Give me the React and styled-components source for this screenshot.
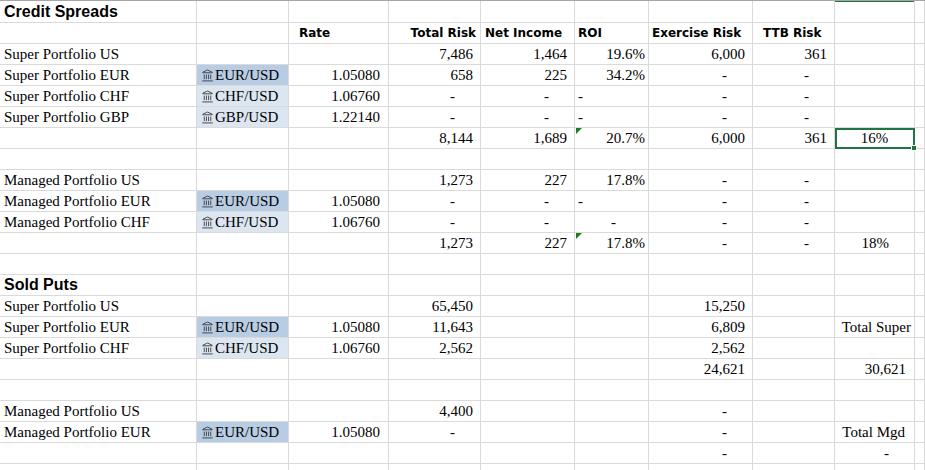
import React from "react";
import styled, { createGlobalStyle } from "styled-components";
import { Landmark } from "lucide-react";

const Global = createGlobalStyle`
  html, body { margin: 0; padding: 0; background: #fff; overflow: hidden; }
`;

const COLS = [197, 92, 100, 92, 94, 74, 104, 82, 80, 10];

const Sheet = styled.div`
  display: grid;
  grid-template-columns: ${COLS.map((c) => c + "px").join(" ")};
  grid-auto-rows: 21px;
  grid-template-rows: 22px;
  border-top: 1px solid #a6a6a6;
  width: 925px;
  height: 470px;
  overflow: hidden;
  box-sizing: border-box;
`;

const Cell = styled.div`
  position: relative;
  box-sizing: border-box;
  border-right: 1px solid #dadada;
  border-bottom: 1px solid #dadada;
  display: flex;
  align-items: flex-end;
  justify-content: ${(p) => (p.$a === "r" ? "flex-end" : p.$a === "c" ? "center" : "flex-start")};
  padding: 0 ${(p) => p.$pr}px 1px ${(p) => p.$pl}px;
  white-space: nowrap;
  overflow: visible;
  color: #000;
  background: ${(p) => p.$fill || "transparent"};
  font-family: ${(p) =>
    p.$kind === "title"
      ? '"Liberation Sans", Arial, sans-serif'
      : p.$kind === "head"
      ? '"DejaVu Sans", Verdana, sans-serif'
      : '"Liberation Serif", "Times New Roman", serif'};
  font-size: ${(p) => (p.$kind === "title" ? "16px" : p.$kind === "head" ? "12px" : "15px")};
  font-weight: ${(p) => (p.$kind === "title" || p.$kind === "head" ? 700 : 400)};
  line-height: 18px;
  ${(p) => p.$sel && `outline: 2px solid #217346; outline-offset: -2px; z-index: 2;`}
`;

const Handle = styled.span`
  position: absolute;
  right: -3px;
  bottom: -3px;
  width: 6px;
  height: 6px;
  background: #217346;
  border: 1px solid #fff;
  box-sizing: border-box;
`;

const Tri = styled.span`
  position: absolute;
  left: 1px;
  top: 0;
  width: 0;
  height: 0;
  border-top: 6px solid #1e7a1e;
  border-right: 6px solid transparent;
`;

const TopSel = styled.span`
  position: absolute;
  left: 0;
  right: 0;
  top: -1px;
  height: 2px;
  background: #217346;
`;

const Ccy = styled.span`
  display: inline-flex;
  align-items: flex-end;
  gap: 1px;
  svg { margin-bottom: 2px; }
`;

const DARK = "#b8cce4";
const LIGHT = "#dce6f1";

const n = (t, pr = 7) => ({ t, a: "r", pr });
const d = (pr = 25) => ({ t: "-", a: "r", pr });
const lbl = (t) => ({ t, a: "l", pl: 4 });
const ccy = (t, dark) => ({ ccy: t, fill: dark ? DARK : LIGHT, a: "l", pl: 4 });

const rows = [
  { h: 22, c: { 0: { t: "Credit Spreads", kind: "title", pl: 4 }, 8: { topSel: true } } },
  {
    c: {
      2: { t: "Rate", kind: "head", pl: 10 },
      3: { t: "Total Risk", kind: "head", a: "r", pr: 4 },
      4: { t: "Net Income", kind: "head", pl: 4 },
      5: { t: "ROI", kind: "head", pl: 3 },
      6: { t: "Exercise Risk", kind: "head", pl: 3 },
      7: { t: "TTB Risk", kind: "head", pl: 10 },
    },
  },
  { c: { 0: lbl("Super Portfolio US"), 3: n("7,486"), 4: n("1,464"), 5: n("19.6%", 3), 6: n("6,000"), 7: n("361") } },
  { c: { 0: lbl("Super Portfolio EUR"), 1: ccy("EUR/USD", true), 2: n("1.05080", 8), 3: n("658"), 4: n("225"), 5: n("34.2%", 3), 6: d(), 7: d() } },
  { c: { 0: lbl("Super Portfolio CHF"), 1: ccy("CHF/USD"), 2: n("1.06760", 8), 3: d(), 4: d(), 5: { t: "-", pl: 3 }, 6: d(), 7: d() } },
  { c: { 0: lbl("Super Portfolio GBP"), 1: ccy("GBP/USD"), 2: n("1.22140", 8), 3: d(), 4: d(), 5: { t: "-", pl: 3 }, 6: d(), 7: d() } },
  { c: { 3: n("8,144"), 4: n("1,689"), 5: { ...n("20.7%", 3), tri: true }, 6: n("6,000"), 7: n("361"), 8: { t: "16%", a: "c", sel: true } } },
  { c: {} },
  { c: { 0: lbl("Managed Portfolio US"), 3: n("1,273"), 4: n("227"), 5: n("17.8%", 3), 6: d(), 7: d() } },
  { c: { 0: lbl("Managed Portfolio EUR"), 1: ccy("EUR/USD", true), 2: n("1.05080", 8), 3: d(), 4: d(), 5: { t: "-", pl: 3 }, 6: d(), 7: d() } },
  { c: { 0: lbl("Managed Portfolio CHF"), 1: ccy("CHF/USD"), 2: n("1.06760", 8), 3: d(), 4: d(), 5: d(32), 6: d(), 7: d() } },
  { c: { 3: n("1,273"), 4: n("227"), 5: { ...n("17.8%", 3), tri: true }, 6: d(), 7: d(), 8: n("18%", 25) } },
  { c: {} },
  { c: { 0: { t: "Sold Puts", kind: "title", pl: 4 } } },
  { c: { 0: lbl("Super Portfolio US"), 3: n("65,450"), 6: n("15,250") } },
  { c: { 0: lbl("Super Portfolio EUR"), 1: ccy("EUR/USD", true), 2: n("1.05080", 8), 3: n("11,643"), 6: n("6,809"), 8: n("Total Super", 3) } },
  { c: { 0: lbl("Super Portfolio CHF"), 1: ccy("CHF/USD"), 2: n("1.06760", 8), 3: n("2,562"), 6: n("2,562") } },
  { c: { 6: n("24,621"), 8: n("30,621", 8) } },
  { c: {} },
  { c: { 0: lbl("Managed Portfolio US"), 3: n("4,400"), 6: d() } },
  { c: { 0: lbl("Managed Portfolio EUR"), 1: ccy("EUR/USD", true), 2: n("1.05080", 8), 3: d(), 6: d(), 8: n("Total Mgd", 9) } },
  { c: { 6: d(), 8: d(25) } },
  { c: {} },
];

export default function App() {
  return (
    <>
      <Global />
      <Sheet>
        {rows.map((r, ri) =>
          COLS.map((_, ci) => {
            const c = r.c[ci] || {};
            return (
              <Cell
                key={ri + "-" + ci}
                $a={c.a || "l"}
                $pr={c.pr || 0}
                $pl={c.pl || 0}
                $kind={c.kind}
                $fill={c.fill}
                $sel={c.sel}
              >
                {c.ccy ? (
                  <Ccy>
                    <Landmark size={13} strokeWidth={1.6} color="#333" />
                    {c.ccy}
                  </Ccy>
                ) : (
                  c.t
                )}
                {c.tri && <Tri />}
                {c.sel && <Handle />}
                {c.topSel && <TopSel />}
              </Cell>
            );
          })
        )}
      </Sheet>
    </>
  );
}
